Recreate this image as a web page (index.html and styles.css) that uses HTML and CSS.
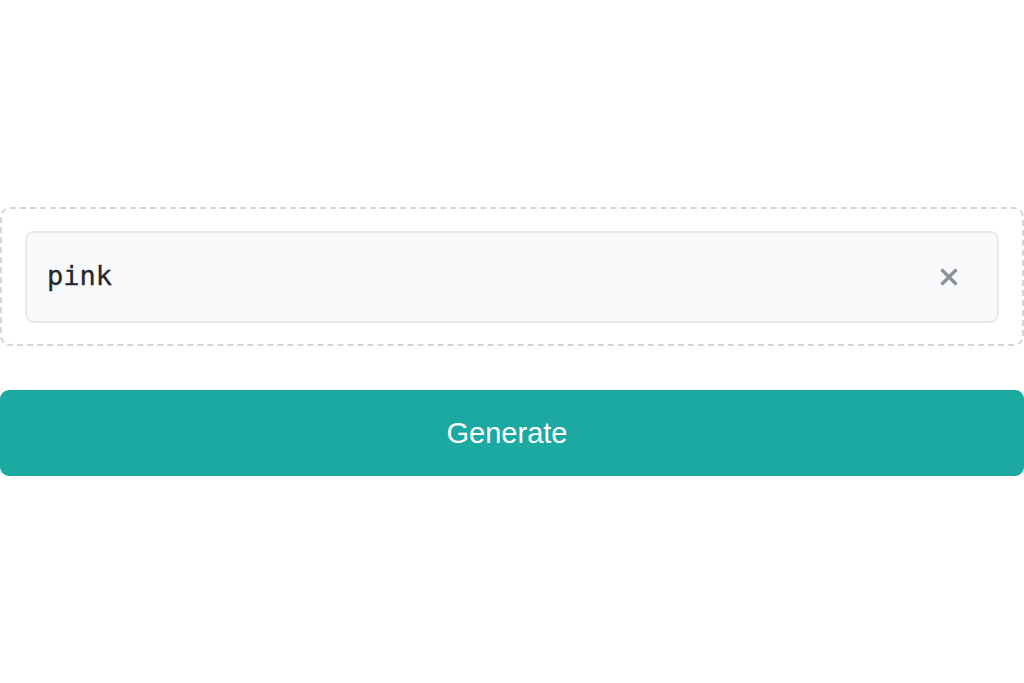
FILE: index.html
```html
<!DOCTYPE html>
<html>
<head>
<meta charset="utf-8">
<link rel="stylesheet" href="styles.css">
</head>
<body>
<main class="page">
  <div class="dropzone">
    <div class="field">
      <span class="value">pink</span>
      <button class="clear" aria-label="Clear">
        <svg width="20" height="20" viewBox="0 0 20 20"><path d="M2.5 2.5 L17.5 17.5 M17.5 2.5 L2.5 17.5" stroke="#8d9099" stroke-width="3.2" stroke-linecap="butt" fill="none"/></svg>
      </button>
    </div>
  </div>
  <button class="generate">Generate</button>
</main>
</body>
</html>
```
FILE: styles.css
```css
html, body {
  margin: 0;
  padding: 0;
  background: #ffffff;
}
.page {
  padding-top: 207px;
  display: flex;
  flex-direction: column;
  gap: 44px;
}
.dropzone {
  box-sizing: border-box;
  width: 1024px;
  height: 139px;
  border: 2px dashed #d2d5dd;
  border-radius: 10px;
  padding: 22px 23px;
}
.field {
  box-sizing: border-box;
  height: 92px;
  background: #f7f9fb;
  border: 2px solid #e6e8ec;
  border-radius: 9px;
  display: flex;
  align-items: center;
  justify-content: space-between;
  padding: 0 38px 0 20px;
}
.value {
  font-family: "DejaVu Sans Mono", monospace;
  font-size: 27px;
  color: #26272c;
  margin-top: -3px;
  -webkit-text-stroke: 0.3px #26272c;
}
.clear {
  background: none;
  border: 0;
  padding: 0;
  width: 20px;
  height: 20px;
  display: flex;
}
.generate {
  width: 1024px;
  height: 86px;
  border: 0;
  border-radius: 9px;
  background: #1ba9a2;
  color: #ffffff;
  font-family: "Liberation Sans", Arial, sans-serif;
  font-size: 29px;
  padding: 0 10px 0 0;
}
```
